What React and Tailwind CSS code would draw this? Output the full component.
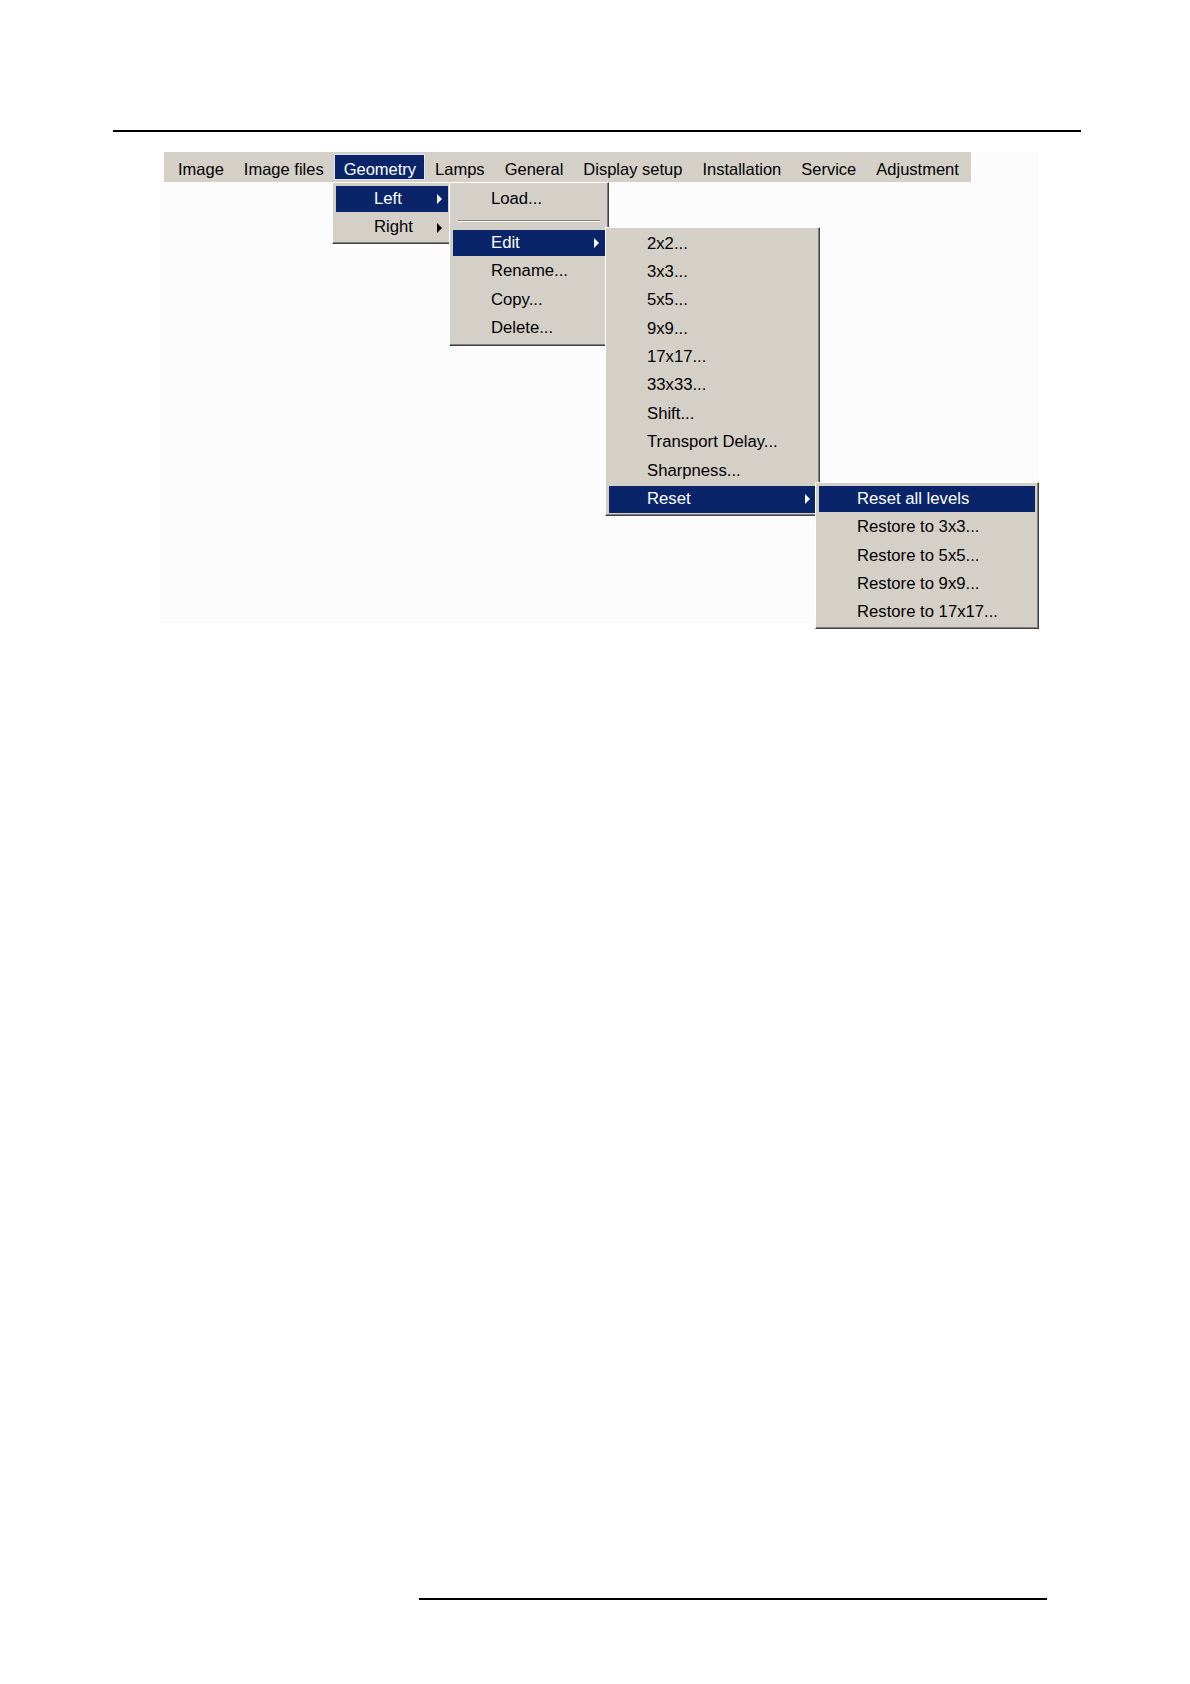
import React from 'react';

const bar = ['Image', 'Image files', 'Geometry', 'Lamps', 'General', 'Display setup', 'Installation', 'Service', 'Adjustment'];

const Arrow = ({ active }) => (
  <span
    className={`absolute right-[6px] top-1/2 -translate-y-1/2 w-0 h-0 border-y-[5px] border-y-transparent border-l-[5px] ${
      active ? 'border-l-white' : 'border-l-black'
    }`}
  />
);

const Row = ({ label, active, sub }) => (
  <div
    className={`relative shrink-0 my-[1px] h-[26.4px] flex items-center pl-[38px] whitespace-nowrap ${
      active ? 'bg-[#0a246a] text-white' : 'text-black'
    }`}
  >
    {label}
    {sub && <Arrow active={active} />}
  </div>
);

const Menu = ({ className, children }) => (
  <div
    className={`absolute flex flex-col bg-[#d4d0c8] border border-t-white border-l-white border-r-[#404040] border-b-[#404040] shadow-[inset_-1px_-1px_0_#808080] px-[3px] pt-[2px] ${className}`}
  >
    {children}
  </div>
);

export default function App() {
  return (
    <div className="min-h-[1684px] bg-white text-[16.7px] leading-none text-black font-['Liberation_Sans',Arial,sans-serif] pt-[130px]">
      {/* header rule */}
      <div className="ml-[113px] w-[968px] h-[2px] bg-black" />

      {/* screenshot */}
      <div className="relative mt-[20px] ml-[160px] w-[879px] h-[471px] bg-[#fcfcfc]">
        <div className="ml-[4px] w-[807px] h-[30px] bg-[#d4d0c8] flex items-center pl-[4px] text-[16.5px]">
          {bar.map(item => (
            <div
              key={item}
              className={`shrink-0 whitespace-nowrap h-[26px] flex items-center pt-[5px] ${
                item === 'Geometry'
                  ? 'bg-[#0a246a] text-white border border-[#e4e4ec] pl-[9px] pr-[8px]'
                  : 'px-[10px]'
              }`}
            >
              {item}
            </div>
          ))}
        </div>

        <Menu className="left-[172px] top-[30px] w-[120px] pb-[1px]">
          <Row label="Left" active sub />
          <Row label="Right" sub />
        </Menu>

        <Menu className="left-[289px] top-[30px] w-[160px] pb-[3px]">
          <Row label="Load..." />
          <div className="shrink-0 h-[15.5px] flex items-center px-[5px]">
            <div className="w-full h-[2px] border-t border-t-[#808080] border-b border-b-white" />
          </div>
          <Row label="Edit" active sub />
          <Row label="Rename..." />
          <Row label="Copy..." />
          <Row label="Delete..." />
        </Menu>

        <Menu className="left-[445px] top-[74.7px] w-[215px] pb-[1px]">
          {['2x2...', '3x3...', '5x5...', '9x9...', '17x17...', '33x33...', 'Shift...', 'Transport Delay...', 'Sharpness...'].map(l => (
            <Row key={l} label={l} />
          ))}
          <Row label="Reset" active sub />
        </Menu>

        <Menu className="left-[655px] top-[330px] w-[224px] pb-[1px]">
          <Row label="Reset all levels" active />
          <Row label="Restore to 3x3..." />
          <Row label="Restore to 5x5..." />
          <Row label="Restore to 9x9..." />
          <Row label="Restore to 17x17..." />
        </Menu>
      </div>

      {/* footer rule */}
      <div className="mt-[974.7px] ml-[419px] w-[628px] h-[2px] bg-black" />
    </div>
  );
}
